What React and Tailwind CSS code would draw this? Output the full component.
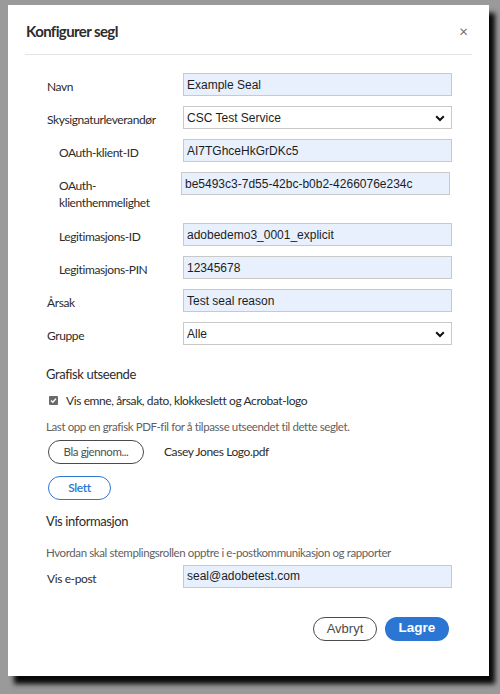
import React from 'react';

const sans = { fontFamily: 'Lato, "Open Sans", sans-serif' };
const arial = { fontFamily: '"Liberation Sans", Arial, sans-serif' };

const Field = ({ label, value, sub, select }) => (
  <div className="flex items-start">
    <div
      className={`w-[136px] shrink-0 pt-[5px] text-[12px] leading-[17px] tracking-[-0.4px] text-[#2c2c2c] ${sub ? 'pl-3' : ''}`}
    >
      {label}
    </div>
    <div
      className={`relative flex h-[23px] w-[269px] items-center border border-[#c9c9c9] px-[3px] text-[12px] text-[#1d1d1d] ${select ? 'bg-white' : 'bg-[#e8f0fe]'}`}
      style={arial}
    >
      {value}
      {select && (
        <svg className="absolute right-[6px] top-[8px]" width="10" height="7" viewBox="0 0 10 7">
          <path d="M1.2 1.2 L5 5 L8.8 1.2" fill="none" stroke="#111" strokeWidth="2" />
        </svg>
      )}
    </div>
  </div>
);

const App = () => {
  return (
    <div className="h-[694px] w-[500px] overflow-hidden bg-[#9a9a9a] pl-[8px] pt-[5px]" style={sans}>
      <div className="relative h-[671px] w-[481px] bg-white shadow-[6px_8px_5px_rgba(0,0,0,0.95)]">
        {/* Header */}
        <div className="mx-[17px] flex h-[50px] items-center justify-between border-b border-[#e4e4e4] pl-[1px] pt-[3px]">
          <h1 className="text-[15px] font-bold tracking-[-0.6px] text-[#2c2c2c]">Konfigurer segl</h1>
          <span className="mr-[4px] text-[15px] leading-none text-[#6e6e6e]">×</span>
        </div>

        {/* Fields */}
        <div className="flex flex-col gap-[10px] pl-[39px] pt-[18px]">
          <Field label="Navn" value="Example Seal" />
          <Field label="Skysignaturleverandør" value="CSC Test Service" select />
          <Field label="OAuth-klient-ID" value="AI7TGhceHkGrDKc5" sub />
          <div className="flex h-[41px] items-start">
            <div className="w-[136px] shrink-0 pl-3 pt-[5px] text-[12px] leading-[17px] tracking-[-0.4px] text-[#2c2c2c]">
              OAuth-
              <br />
              klienthemmelighet
            </div>
            <div
              className="-ml-[2px] flex h-[23px] w-[269px] items-center border border-[#c9c9c9] bg-[#e8f0fe] px-[3px] text-[12px] text-[#1d1d1d]"
              style={arial}
            >
              be5493c3-7d55-42bc-b0b2-4266076e234c
            </div>
          </div>
          <Field label="Legitimasjons-ID" value="adobedemo3_0001_explicit" sub />
          <Field label="Legitimasjons-PIN" value="12345678" sub />
          <Field label="Årsak" value="Test seal reason" />
          <Field label="Gruppe" value="Alle" select />
        </div>

        {/* Grafisk utseende */}
        <div className="pl-[38px] tracking-[-0.4px]">
          <div className="mt-[20px] text-[13px] text-[#2c2c2c]">Grafisk utseende</div>
          <div className="mt-[7px] flex items-center gap-[8px] pl-[3px] text-[12px] text-[#2c2c2c]">
            <span className="flex h-[9px] w-[9px] items-center justify-center rounded-[1px] bg-[#6a6a6a]">
              <svg width="7" height="7" viewBox="0 0 7 7">
                <path d="M1 3.6 L2.8 5.3 L6 1.6" fill="none" stroke="#fff" strokeWidth="1.4" />
              </svg>
            </span>
            Vis emne, årsak, dato, klokkeslett og Acrobat-logo
          </div>
          <div className="mt-[8px] text-[11.5px] text-[#5f5f5f]">
            Last opp en grafisk PDF-fil for å tilpasse utseendet til dette seglet.
          </div>
          <div className="mt-[5px] flex items-center gap-[20px] pl-[2px]">
            <button className="h-[24px] w-[96px] rounded-full border border-[#4b4b4b] text-[11.5px] text-[#505050]">
              Bla gjennom...
            </button>
            <span className="text-[12px] text-[#2c2c2c]">Casey Jones Logo.pdf</span>
          </div>
          <button className="ml-[2px] mt-[12px] h-[24px] w-[63px] rounded-full border border-[#2b76d2] text-[12px] font-semibold text-[#2b76d2]">
            Slett
          </button>
          <div className="mt-[12px] text-[13px] text-[#2c2c2c]">Vis informasjon</div>
          <div className="mt-[13px] text-[11.5px] text-[#5f5f5f]">
            Hvordan skal stemplingsrollen opptre i e-postkommunikasjon og rapporter
          </div>
        </div>
        <div className="mt-[3px] pl-[39px]">
          <Field label="Vis e-post" value="seal@adobetest.com" />
        </div>

        {/* Footer */}
        <div className="mt-[29px] flex justify-end gap-[8px] pr-[40px]" style={arial}>
          <button className="h-[24px] w-[64px] rounded-full border border-[#4b4b4b] text-[13px] text-[#4b4b4b]">
            Avbryt
          </button>
          <button className="h-[24px] w-[64px] rounded-full bg-[#2b76d2] text-[13.5px] font-bold text-white">
            Lagre
          </button>
        </div>
      </div>
    </div>
  );
};

export default App;
